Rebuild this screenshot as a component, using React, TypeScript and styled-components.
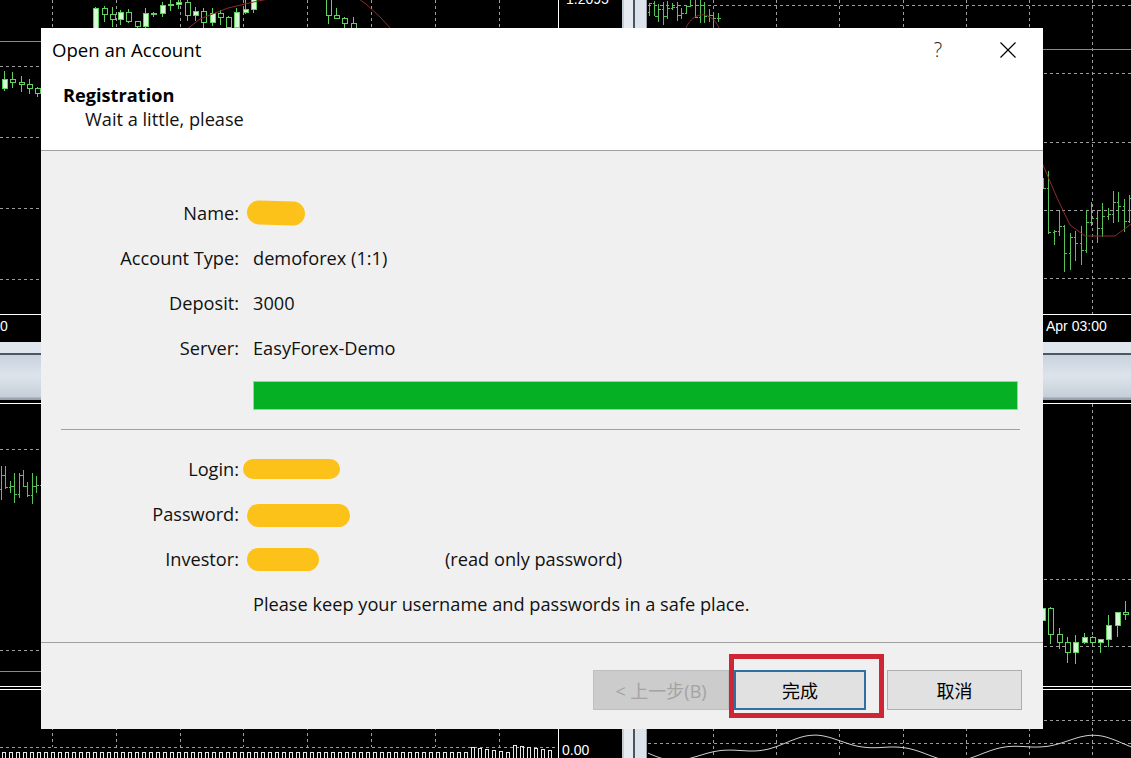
import React from 'react';
import styled, { createGlobalStyle } from 'styled-components';

const GlobalStyle = createGlobalStyle`
  *, *::before, *::after { box-sizing: border-box; }
  html, body { margin: 0; padding: 0; background: #000; }
  body { font-family: "Open Sans", "Noto Sans", "Noto Sans CJK SC", sans-serif; }
`;

/* ---------- chart helpers ---------- */

type Candle = { x: number; o: number; c: number; h: number; l: number };

const seeded = (seed: number) => {
  let s = seed;
  return () => {
    s = (s * 16807) % 2147483647;
    return (s - 1) / 2147483646;
  };
};

const steps = (from: number, to: number, step: number) => {
  const out: number[] = [];
  for (let v = from; v <= to; v += step) out.push(v);
  return out;
};

const lerp = (a: number, b: number, t: number) => a + (b - a) * Math.min(1, Math.max(0, t));

const makeSeries = (seed: number, xs: number[], base: (x: number) => number, vol: number): Candle[] => {
  const rnd = seeded(seed);
  let prev = base(xs[0]);
  return xs.map((x) => {
    const o = prev;
    const c = base(x) + (rnd() - 0.5) * vol * 2;
    const h = Math.min(o, c) - rnd() * vol;
    const l = Math.max(o, c) + rnd() * vol;
    prev = c;
    return { x: Math.round(x) + 0.5, o, c, h, l };
  });
};

const GRID = '#9d9d9d';
const GREEN = '#5fd25f';
const MA_RED = '#8e2b2b';

const ChartSvg = styled.svg`
  display: block;
  width: 100%;
  height: 100%;
`;

const AxisLabel = styled.text`
  font-family: "Liberation Sans", Arial, sans-serif;
  font-size: 14px;
  fill: #fff;
`;

function HGrid({ ys, x1, x2 }: { ys: number[]; x1: number; x2: number }) {
  return (
    <g shapeRendering="crispEdges">
      {ys.map((y) => (
        <line key={y} x1={x1} x2={x2} y1={y + 0.5} y2={y + 0.5} stroke={GRID} strokeDasharray="3 3" />
      ))}
    </g>
  );
}

function VGrid({ xs, y1, y2 }: { xs: number[]; y1: number; y2: number }) {
  return (
    <g shapeRendering="crispEdges">
      {xs.map((x) => (
        <line key={x} x1={Math.round(x) + 0.5} x2={Math.round(x) + 0.5} y1={y1} y2={y2} stroke={GRID} strokeDasharray="3 3" />
      ))}
    </g>
  );
}

function CandleSeries({ data }: { data: Candle[] }) {
  return (
    <g shapeRendering="crispEdges">
      {data.map((k, i) => {
        const top = Math.min(k.o, k.c);
        const up = k.c < k.o;
        return (
          <g key={i}>
            <line x1={k.x} x2={k.x} y1={k.h} y2={k.l} stroke={GREEN} />
            <rect
              x={k.x - 2.5}
              y={top}
              width={5}
              height={Math.max(1, Math.abs(k.o - k.c))}
              fill={up ? '#d4fbd4' : '#000'}
              stroke={GREEN}
            />
          </g>
        );
      })}
    </g>
  );
}

function BarSeries({ data }: { data: Candle[] }) {
  return (
    <g shapeRendering="crispEdges" stroke="#57c257">
      {data.map((k, i) => (
        <g key={i}>
          <line x1={k.x} x2={k.x} y1={k.h} y2={k.l} />
          <line x1={k.x - 2} x2={k.x} y1={k.o} y2={k.o} />
          <line x1={k.x} x2={k.x + 2} y1={k.c} y2={k.c} />
        </g>
      ))}
    </g>
  );
}

/* ---------- the four chart windows ---------- */

function UpperLeftChart() {
  const candles = makeSeries(
    7,
    steps(4, 550, 8.3),
    (x) => {
      if (x < 60) return 88;
      if (x < 95) return lerp(88, 18, (x - 60) / 35);
      if (x < 250) return 14 + 7 * Math.sin(x / 16);
      if (x < 325) return -30;
      if (x < 348) return 16;
      return 140;
    },
    9
  );
  return (
    <ChartSvg viewBox="0 0 622 342">
      <VGrid xs={steps(52, 520, 63.8)} y1={0} y2={314} />
      <HGrid ys={[66, 137, 208, 279]} x1={0} x2={558} />
      <line x1={0} x2={558} y1={41.5} y2={41.5} stroke="#8a8a8a" />
      <CandleSeries data={candles} />
      <polyline points="186,30 200,19 228,8 258,1 285,-4" fill="none" stroke={MA_RED} />
      <polyline points="352,-6 366,4 380,17 392,30" fill="none" stroke={MA_RED} />
      <line x1={558.5} x2={558.5} y1={0} y2={314} stroke="#fff" />
      <line x1={0} x2={622} y1={314.5} y2={314.5} stroke="#fff" />
      <AxisLabel x={566} y={4}>1.2095</AxisLabel>
      <AxisLabel x={0} y={331}>0</AxisLabel>
    </ChartSvg>
  );
}

function UpperRightChart() {
  const head = makeSeries(23, steps(1, 72, 4.6), (x) => 12 + 5 * Math.sin(x / 8), 9);
  const tail = makeSeries(
    31,
    steps(384, 483, 5.4),
    (x) => {
      if (x < 395) return 190;
      if (x < 432) return lerp(205, 262, (x - 395) / 37);
      if (x < 442) return lerp(262, 215, (x - 432) / 10);
      return 216 + 8 * Math.sin(x / 7);
    },
    20
  );
  return (
    <ChartSvg viewBox="0 0 483 342">
      <VGrid xs={steps(65, 483, 63.2)} y1={0} y2={314} />
      <HGrid ys={[5, 73, 142, 210, 278]} x1={0} x2={483} />
      <line x1={395} x2={483} y1={49.5} y2={49.5} stroke="#8a8a8a" />
      <BarSeries data={head} />
      <BarSeries data={tail} />
      <path d="M38 28 C42 18, 52 12, 60 16 S70 26, 72 30" fill="none" stroke={MA_RED} />
      <polyline points="380,140 395,165 410,200 422,225 437,236 467,236 483,224" fill="none" stroke={MA_RED} />
      <line x1={0} x2={483} y1={314.5} y2={314.5} stroke="#fff" />
      <AxisLabel x={398} y={331}>Apr 03:00</AxisLabel>
    </ChartSvg>
  );
}

function LowerLeftChart() {
  const bars = makeSeries(5, steps(1, 44, 4.4), (x) => 86 + 6 * Math.sin(x / 5), 14);
  const volume = steps(2, 548, 7).map((x, i) => {
    const h = x > 470 ? 6 + ((i * 7) % 8) : 6;
    return { x, h };
  });
  return (
    <ChartSvg viewBox="0 0 622 356">
      <line x1={0} x2={622} y1={1.5} y2={1.5} stroke="#fff" />
      <VGrid xs={steps(52, 520, 63.8)} y1={2} y2={284} />
      <VGrid xs={steps(52, 520, 63.8)} y1={289} y2={345} />
      <HGrid ys={[47, 248]} x1={0} x2={558} />
      <line x1={0} x2={558} y1={269.5} y2={269.5} stroke="#8a8a8a" />
      <BarSeries data={bars} />
      <line x1={0} x2={622} y1={284.5} y2={284.5} stroke="#fff" />
      <line x1={0} x2={622} y1={287.5} y2={287.5} stroke="#fff" />
      <HGrid ys={[345]} x1={0} x2={558} />
      <g shapeRendering="crispEdges">
        {volume.map((v) => (
          <rect key={v.x} x={v.x + 0.5} y={356 - v.h + 0.5} width={3} height={v.h + 2} fill="none" stroke="#e8e8e8" />
        ))}
      </g>
      <line x1={558.5} x2={558.5} y1={288} y2={356} stroke="#fff" />
      <AxisLabel x={562} y={353}>0.00</AxisLabel>
    </ChartSvg>
  );
}

function LowerRightChart() {
  const candles = makeSeries(
    17,
    steps(394, 483, 8.3),
    (x) => {
      if (x < 430) return lerp(218, 252, (x - 394) / 36);
      return lerp(252, 208, (x - 430) / 53);
    },
    12
  );
  const wave = steps(0, 483, 3)
    .map((x) => `${x},${(346 + 9 * Math.sin(x / 42 + 0.6) + 4 * Math.sin(x / 15)).toFixed(1)}`)
    .join(' ');
  return (
    <ChartSvg viewBox="0 0 483 356">
      <line x1={0} x2={483} y1={1.5} y2={1.5} stroke="#fff" />
      <VGrid xs={steps(65, 483, 63.2)} y1={2} y2={356} />
      <HGrid ys={[177, 244, 318, 341]} x1={0} x2={483} />
      <CandleSeries data={candles} />
      <line x1={0} x2={483} y1={284.5} y2={284.5} stroke="#fff" />
      <line x1={0} x2={483} y1={287.5} y2={287.5} stroke="#fff" />
      <polyline points={wave} fill="none" stroke="#cfcfcf" />
    </ChartSvg>
  );
}

/* ---------- terminal workspace ---------- */

const Desktop = styled.div`
  position: relative;
  width: 1131px;
  height: 758px;
  overflow: hidden;
  background: #000;
`;

const Workspace = styled.div`
  display: grid;
  grid-template-columns: 622px 26px 1fr;
  grid-template-rows: 342px 60px 1fr;
  width: 100%;
  height: 100%;
`;

const ChartWindow = styled.div`
  background: #000;
  overflow: hidden;
`;

const VSplitter = styled.div`
  background: linear-gradient(
    to right,
    #c4ccd6 0 2px,
    #e6ebf1 2px 11px,
    #4a5460 11px 13px,
    #dce3ea 13px 24px,
    #98a1ab 24px 25px,
    #000 25px
  );
`;

const HSplitter = styled.div`
  grid-column: 1 / -1;
  background: linear-gradient(
    to bottom,
    #dfe6ee 0 11px,
    #4d5864 11px 13px,
    #c9d3de 13px,
    #dce3eb 34px,
    #c6cfd9 55px,
    #9aa4ae 56px 58px,
    #000 58px
  );
`;

/* ---------- wizard dialog ---------- */

const Dialog = styled.section`
  position: absolute;
  left: 41px;
  top: 28px;
  width: 1002px;
  height: 701px;
  display: flex;
  flex-direction: column;
  background: #f0f0f0;
  color: #111;
  font-family: "Open Sans", "Noto Sans", "Noto Sans CJK SC", sans-serif;
  font-size: 18.2px;
`;

const HeaderPanel = styled.header`
  height: 123px;
  flex-shrink: 0;
  background: #fff;
  border-bottom: 1px solid #a0a0a0;
`;

const TitleBar = styled.div`
  height: 43px;
  display: flex;
  align-items: center;
  padding: 0 12px 0 11px;
`;

const Title = styled.h1`
  flex: 1;
  margin: 0;
  font-size: 18.6px;
  font-weight: 400;
  color: #000;
`;

const CaptionButton = styled.button`
  width: 46px;
  height: 43px;
  padding: 0;
  border: 0;
  background: transparent;
  display: flex;
  align-items: center;
  justify-content: center;
  color: #222;
  font-family: "Open Sans", sans-serif;
  font-size: 20px;
  font-weight: 300;
  & + & {
    margin-left: 24px;
  }
`;

const PageHeading = styled.div`
  padding: 12px 0 0 22px;
`;

const PageTitle = styled.div`
  font-weight: 700;
  line-height: 24px;
  color: #000;
`;

const PageSubtitle = styled.div`
  padding-left: 22px;
  line-height: 25px;
`;

const Body = styled.div`
  flex: 1;
  padding: 39px 25px 0 20px;
`;

const FieldGrid = styled.div`
  display: grid;
  grid-template-columns: 178px 1fr;
  column-gap: 14px;
  grid-auto-rows: 45px;
  align-items: center;
`;

const FieldLabel = styled.div`
  text-align: right;
  white-space: nowrap;
`;

const FieldValue = styled.div`
  display: flex;
  align-items: center;
  white-space: nowrap;
`;

const SecretSlot = styled.div`
  width: 192px;
  display: flex;
  align-items: center;
`;

const Redacted = styled.span<{ $w: number; $h: number; $dx: number; $dy?: number; $tilt?: number }>`
  display: inline-block;
  width: ${(p) => p.$w}px;
  height: ${(p) => p.$h}px;
  margin-left: ${(p) => p.$dx}px;
  background: #fcc21a;
  border-radius: ${(p) => p.$h / 2}px;
  transform: translateY(${(p) => p.$dy ?? 0}px) rotate(${(p) => p.$tilt ?? 0}deg);
`;

const ProgressTrack = styled.div`
  height: 29px;
  margin: 11px 0 0 192px;
  border: 1px solid #bcbcbc;
  background: #e6e6e6;
`;

const ProgressFill = styled.div`
  height: 100%;
  background: #06b025;
`;

const Rule = styled.div`
  height: 1px;
  margin: 19px -2px 16px 0;
  background: #a0a0a0;
`;

const Footer = styled.footer`
  height: 87px;
  flex-shrink: 0;
  border-top: 1px solid #a0a0a0;
  display: flex;
  justify-content: flex-end;
  align-items: flex-start;
  padding: 27px 21px 0 0;
`;

const WizardButton = styled.button<{ $width: number; $variant?: 'disabled' | 'default' }>`
  width: ${(p) => p.$width}px;
  height: 40px;
  padding: 0;
  font-family: "Open Sans", "Noto Sans CJK SC", sans-serif;
  font-size: 18px;
  background: ${(p) => (p.$variant === 'disabled' ? '#cccccc' : '#e1e1e1')};
  border: ${(p) =>
    p.$variant === 'default' ? '2px solid #2f70a4' : p.$variant === 'disabled' ? '1px solid #bfbfbf' : '1px solid #adadad'};
  color: ${(p) => (p.$variant === 'disabled' ? '#a3a3a3' : '#000')};
`;

const Highlight = styled.span`
  position: relative;
  display: inline-flex;
  margin: 0 21px 0 5px;

  &::after {
    content: '';
    position: absolute;
    left: -5px;
    top: -16px;
    right: -18px;
    bottom: -8px;
    border: 5px solid #cf2636;
    pointer-events: none;
  }
`;

function CloseGlyph() {
  return (
    <svg width="16" height="16" viewBox="0 0 16 16">
      <path d="M0.5 0.5 L15.5 15.5 M15.5 0.5 L0.5 15.5" stroke="#000" strokeWidth="1.2" fill="none" />
    </svg>
  );
}

function OpenAccountDialog() {
  return (
    <Dialog>
      <HeaderPanel>
        <TitleBar>
          <Title>Open an Account</Title>
          <CaptionButton>?</CaptionButton>
          <CaptionButton>
            <CloseGlyph />
          </CaptionButton>
        </TitleBar>
        <PageHeading>
          <PageTitle>Registration</PageTitle>
          <PageSubtitle>Wait a little, please</PageSubtitle>
        </PageHeading>
      </HeaderPanel>

      <Body>
        <FieldGrid>
          <FieldLabel>Name:</FieldLabel>
          <FieldValue>
            <Redacted $w={58} $h={24} $dx={-6} $tilt={2} />
          </FieldValue>
          <FieldLabel>Account Type:</FieldLabel>
          <FieldValue>demoforex (1:1)</FieldValue>
          <FieldLabel>Deposit:</FieldLabel>
          <FieldValue>3000</FieldValue>
          <FieldLabel>Server:</FieldLabel>
          <FieldValue>EasyForex-Demo</FieldValue>
        </FieldGrid>

        <ProgressTrack>
          <ProgressFill style={{ width: '100%' }} />
        </ProgressTrack>

        <Rule />

        <FieldGrid>
          <FieldLabel>Login:</FieldLabel>
          <FieldValue>
            <Redacted $w={97} $h={20} $dx={-10} />
          </FieldValue>
          <FieldLabel>Password:</FieldLabel>
          <FieldValue>
            <Redacted $w={103} $h={23} $dx={-6} $dy={2} />
          </FieldValue>
          <FieldLabel>Investor:</FieldLabel>
          <FieldValue>
            <SecretSlot>
              <Redacted $w={72} $h={23} $dx={-6} $dy={1} />
            </SecretSlot>
            (read only password)
          </FieldValue>
          <FieldLabel />
          <FieldValue>Please keep your username and passwords in a safe place.</FieldValue>
        </FieldGrid>
      </Body>

      <Footer>
        <WizardButton $width={136} $variant="disabled" disabled>
          &lt; 上一步(B)
        </WizardButton>
        <Highlight>
          <WizardButton $width={132} $variant="default">
            完成
          </WizardButton>
        </Highlight>
        <WizardButton $width={135}>取消</WizardButton>
      </Footer>
    </Dialog>
  );
}

export default function App() {
  return (
    <>
      <GlobalStyle />
      <Desktop>
        <Workspace>
          <ChartWindow>
            <UpperLeftChart />
          </ChartWindow>
          <VSplitter />
          <ChartWindow>
            <UpperRightChart />
          </ChartWindow>
          <HSplitter />
          <ChartWindow>
            <LowerLeftChart />
          </ChartWindow>
          <VSplitter />
          <ChartWindow>
            <LowerRightChart />
          </ChartWindow>
        </Workspace>
        <OpenAccountDialog />
      </Desktop>
    </>
  );
}
